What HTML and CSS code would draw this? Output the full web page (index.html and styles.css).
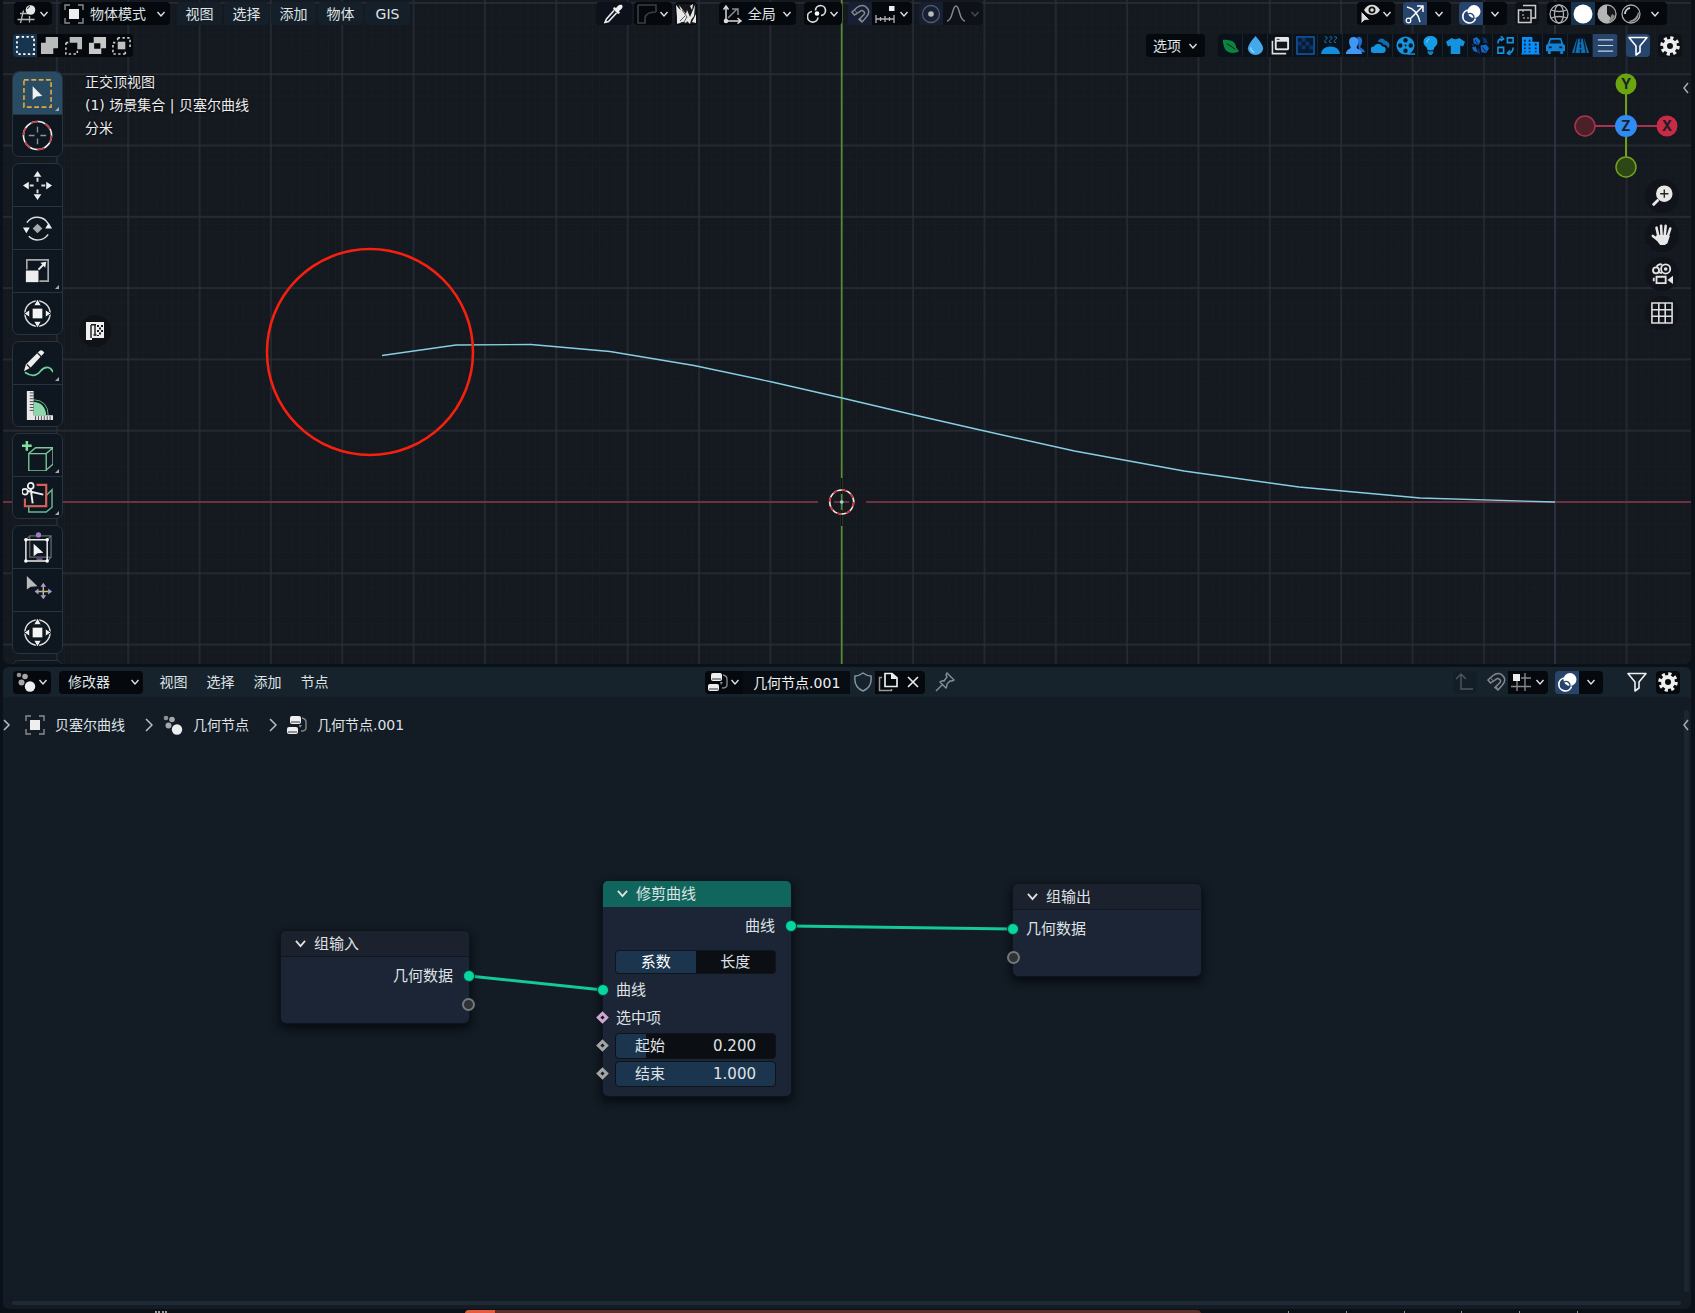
FILE: index.html
```html
<!DOCTYPE html>
<html lang="zh-CN">
<head>
<meta charset="utf-8">
<meta name="viewport" content="width=device-width, initial-scale=1">
<title>几何节点.001</title>
<link rel="stylesheet" href="styles.css">
</head>
<body>
<svg class="sprite" aria-hidden="true">
  <symbol id="chev" viewBox="0 0 10 10"><path d="M1.500 3l3.500 4 3.500-4" fill="none" stroke="currentColor" stroke-width="1.400"/></symbol>
  <symbol id="viewport-type" viewBox="0 0 20 20"><g fill="none" stroke="#b5b8bb" stroke-width="1.300"><path d="M3 9.500h8M0.500 15.500h17M6.500 6.500L3.500 19M12.500 12v6.500"/></g><circle cx="13.500" cy="6" r="4.800" fill="#e6e6e6"/><path d="M10.500 5a3 3 0 0 1 2.500-2.500" stroke="#14181f" fill="none"/></symbol>
  <symbol id="object" viewBox="0 0 20 20"><path d="M1 6V1h5M14 1h5v5M19 14v5h-5M6 19H1v-5" fill="none" stroke="#8a8d90" stroke-width="1.400"/><rect x="5" y="5" width="10" height="10" fill="#eee"/></symbol>
  <symbol id="sel-new" viewBox="0 0 20 20"><rect x="1" y="1" width="18" height="18" fill="none" stroke="#fff" stroke-width="1.800" stroke-dasharray="2.500 2.500"/></symbol>
  <symbol id="sel-add" viewBox="0 0 20 20"><path d="M6 1h13v12h-5v6H1V7h5z" fill="#b9bbbc"/></symbol>
  <symbol id="sel-sub" viewBox="0 0 20 20"><path d="M6 1h13v13h-5V7H6z" fill="#b9bbbc"/><path d="M2 7v12h12v-5M2 7h3" fill="none" stroke="#c8c8c8" stroke-width="1.700" stroke-dasharray="2.500 2.500"/></symbol>
  <symbol id="sel-xor" viewBox="0 0 20 20"><path fill-rule="evenodd" d="M6 1h13v12h-5v6H1V7h5zM6.500 7.500v6H13v-6z" fill="#c8c8c8"/></symbol>
  <symbol id="sel-and" viewBox="0 0 20 20"><path d="M6 2h13v12M6 2v4M14 19H1V7h4M14 19v-4" fill="none" stroke="#c8c8c8" stroke-width="1.700" stroke-dasharray="2.500 2.500"/><rect x="6" y="6" width="8" height="8" fill="#c0c0c0"/></symbol>
  <symbol id="eyedrop" viewBox="0 0 20 20"><path d="M12 4c2-3 4-4 6-3 1.500 2 0 4-3 6l1 2-2 1-5-5 1-2z" fill="#eee"/><path d="M10 6.500L2.500 15 1 18.500 4.500 17.500 12.500 9" fill="none" stroke="#eee" stroke-width="1.600"/></symbol>
  <symbol id="falloff-box" viewBox="0 0 20 20"><path d="M1 1h18v7M1 1v18h7V15q0-7 11-7" fill="none" stroke="#3a3f43" stroke-width="1.600"/></symbol>
  <symbol id="brush" viewBox="0 0 20 20"><rect width="20" height="20" fill="#15171b"/><path d="M0 1l5 6L3 1l7 9 1-4 3 7 5-12-1 11-3 4-1 4-3-3-1 2-4-2-2 2-3 1 2-5-2-2zM14 2l3-2-1 6zM16 18l4-8v9z" fill="#e8e8e8"/><path d="M1 3l10 9 1 5-11 2z" fill="#e8e8e8"/><path d="M4 17l5-5M8 18l3-5M6 6l5 7" stroke="#555"/></symbol>
  <symbol id="orient" viewBox="0 0 20 20"><path d="M3 18V3M0.500 5.500L3 2l2.500 3.500M3 17h14M14.500 14l3.500 3-3.500 2.500" fill="none" stroke="#d9d9d9" stroke-width="1.500"/><path d="M5 14L14 5M9 5h6v6" fill="none" stroke="#8a8d90" stroke-width="1.500"/><circle cx="3" cy="17" r="2.300" fill="#ddd"/></symbol>
  <symbol id="pivot" viewBox="0 0 20 20"><path d="M8.500 6.500A5 5 0 1 1 14 11.500M5 7.500a5.300 5.300 0 1 0 6 6" fill="none" stroke="#ddd" stroke-width="1.700"/><circle cx="10" cy="9.500" r="2.300" fill="#fff"/></symbol>
  <symbol id="magnet" viewBox="0 0 20 20"><path d="M2 8l5-4.500c4-3 8-2.500 10.500 1s1 6.500-1.500 9L12 18l-3-2.500 5-5c2-2.500-2-5-4-3.200L4.500 11z" fill="none" stroke="#84878b" stroke-width="1.500"/><path d="M4.500 6l2.500 2.800M9.500 14.500l3 2.500" stroke="#84878b"/></symbol>
  <symbol id="snap-inc" viewBox="0 0 20 20"><path d="M1 11v8M19 11v8M1 15h18M5.500 13v4M10 12v6M14.500 13v4" stroke="#b5b5b5" fill="none" stroke-width="1.300"/><rect x="14" y="2" width="5.500" height="5" fill="#eee"/></symbol>
  <symbol id="prop" viewBox="0 0 20 20"><circle cx="10" cy="10" r="8.500" fill="none" stroke="#55595e" stroke-width="1.300"/><circle cx="10" cy="10" r="2.800" fill="#bbb"/></symbol>
  <symbol id="bell" viewBox="0 0 20 20"><path d="M1 17c6 0 5-15 9-15s3 15 9 15" fill="none" stroke="#85898d" stroke-width="1.500"/></symbol>
  <symbol id="eye" viewBox="0 0 20 20"><path d="M4 6c4-7 12-7 16 0C16 12.500 8 12.500 4 6z" fill="#ddd"/><circle cx="12" cy="6" r="3.500" fill="#111"/><circle cx="12" cy="6" r="1.800" fill="#ddd"/><path d="M1 7v13l3.500-3.500 5.500-.5z" fill="#ddd" stroke="#05080c"/></symbol>
  <symbol id="gizmo" viewBox="0 0 20 20"><path d="M2 3q10 2 13 15M5 15L17 3M12 2h6v6" fill="none" stroke="#fff" stroke-width="1.500"/><circle cx="3.500" cy="16.500" r="2.300" fill="none" stroke="#fff" stroke-width="1.300"/></symbol>
  <symbol id="overlay" viewBox="0 0 20 20"><path d="M7.500 6a6.500 6.500 0 1 0 7 8.500" fill="none" stroke="#fff" stroke-width="1.700"/><circle cx="13" cy="7.500" r="6.500" fill="#fff"/><path d="M7 10a4 4 0 0 1 6 4" fill="none" stroke="#27496f" stroke-width="1.300"/></symbol>
  <symbol id="xray" viewBox="0 0 20 20"><path d="M6 1.500h12.500V14H14M1.500 6H14v12.500H1.500z" fill="none" stroke="#ccc" stroke-width="1.500"/><path d="M6 6v8h8" fill="none" stroke="#ccc" stroke-dasharray="2 2"/></symbol>
  <symbol id="wire" viewBox="0 0 20 20"><g fill="none" stroke="#aaacae" stroke-width="1.300"><circle cx="10" cy="10" r="9"/><ellipse cx="10" cy="10" rx="4.500" ry="9"/><path d="M2 6q8 3 16 0M2 14q8-3 16 0"/></g></symbol>
  <symbol id="solid" viewBox="0 0 20 20"><circle cx="10" cy="10" r="9.500" fill="#fff"/></symbol>
  <symbol id="matcap" viewBox="0 0 20 20"><circle cx="10" cy="10" r="9" fill="#15181b" stroke="#aaa" stroke-width="1.300"/><path d="M10 1a9 9 0 0 0 0 18l6-3-6-6z" fill="#b5b5b5"/><path d="M12 17l3-7 3 2-3 5z" fill="#8a8a8a"/></symbol>
  <symbol id="rendered" viewBox="0 0 20 20"><circle cx="10" cy="10" r="9" fill="none" stroke="#aaa" stroke-width="1.300"/><path d="M4 10a6 6 0 0 1 5-6" fill="none" stroke="#ccc" stroke-width="1.800"/><path d="M9 18q8 0 9-9l-1-1q-1 7-9 9z" fill="#999"/></symbol>
  <symbol id="leaf" viewBox="0 0 20 20"><path d="M2 4c8 0 13 1 14 8l3 4c-5 3-11 2-14-1C3 12 2 8 2 4z" fill="#0d8340"/><path d="M6 8q5 3 9 6" stroke="#0a1a18" fill="none"/></symbol>
  <symbol id="drop" viewBox="0 0 20 20"><path d="M10 0q8 9 8 13a8 7 0 0 1-16 0q0-4 8-13z" fill="#44a9ea"/><path d="M5 12q0 4 4 5" stroke="#9bd5fa" fill="none" stroke-width="1.500"/></symbol>
  <symbol id="window" viewBox="0 0 20 20"><rect x="4" y="1" width="15" height="14" rx="1.500" fill="#e6e6e6"/><rect x="6" y="6" width="11" height="7" fill="#11161c"/><path d="M1.500 5v13.500H16" fill="none" stroke="#ddd" stroke-width="1.700"/><path d="M6 3.500h3" stroke="#222"/></symbol>
  <symbol id="checker" viewBox="0 0 20 20"><rect x="1" y="1" width="18" height="18" fill="#071a30" stroke="#115aa8" stroke-width="1.600"/><path d="M2 6h4v4H2zM6 10h4v4H6zM10 6h4v4h-4zM14 10h4v4h-4zM6 2h4v4H6z" fill="#0b356b"/></symbol>
  <symbol id="steam" viewBox="0 0 20 20"><path d="M0 19q1-8 10-8t10 8z" fill="#108fdc"/><path d="M4 1h2q1 1 0 2L4 5q-1 2 2 2M9 1h2q1 1 0 2L9 5q-1 2 2 2M14 1h2q1 1 0 2l-2 2q-1 2 2 2" fill="none" stroke="#0d7cbd"/></symbol>
  <symbol id="people" viewBox="0 0 20 20"><path d="M12 1c6-1 6 6 3 10 0 2 4 2 5 6h-6z" fill="#246bd0"/><path d="M8 1c6 0 6 6 3 11 1 2 5 2 6 7H0c0-5 4-5 5-7C2 6 3 1 8 1z" fill="#3e98f4"/></symbol>
  <symbol id="cloud" viewBox="0 0 20 20"><path d="M3 18a3.500 3.500 0 0 1 0-7 5 5 0 0 1 9 0 3.500 3.500 0 1 1 0 7z" fill="#1593dc"/><path d="M7 6c2-5 7-4 8-1 4 0 6 6 3 8-1-3-3-4-5-4-1-2-3-3-6-3z" fill="#116bad"/></symbol>
  <symbol id="reel" viewBox="0 0 20 20"><circle cx="10" cy="10" r="9.500" fill="#1593dc"/><g fill="#0d1721"><circle cx="10" cy="4.500" r="2.300"/><circle cx="10" cy="15.500" r="2.300"/><circle cx="4.500" cy="10" r="2.300"/><circle cx="15.500" cy="10" r="2.300"/><circle cx="10" cy="10" r="1"/></g><path d="M12 19h8" stroke="#1593dc" stroke-width="1.500"/></symbol>
  <symbol id="bulb" viewBox="0 0 20 20"><path d="M10 0c9 0 9 9 4 12l-1 3H7l-1-3C1 9 1 0 10 0z" fill="#159ce5"/><path d="M7 16h6v2l-2 2H9l-2-2z" fill="#1180c4"/><path d="M6 7q0-3 3-4" fill="none" stroke="#84d0ff"/></symbol>
  <symbol id="shirt" viewBox="0 0 20 20"><path d="M6 2q4 3 8 0l6 4-2 5-3-1v9H5v-9l-3 1-2-5z" fill="#1494df"/></symbol>
  <symbol id="cubes" viewBox="0 0 20 20"><path d="M2 3l4-2 4 4-2 5-5-2zM10 10l6-1 3 4-3 5-5-1zM1 12l4-1 2 6-4-1z" fill="#1568c6"/><path d="M12 1l4 2 2 5-5-1zM8 12l2 7-4-1zM0 8l3 1v3z" fill="#0b3472"/><path d="M4 4l4 6M12 12l4 5" stroke="#071728" fill="none"/></symbol>
  <symbol id="swap" viewBox="0 0 20 20"><path d="M12 2h6v5h-6zM2 12h6v6H2zM2 8q0-5 4-5M18 12q0 5-4 6M5 0l3 3-3 2M15 15l-3 3 3 2" fill="none" stroke="#1593dc" stroke-width="1.700"/></symbol>
  <symbol id="building" viewBox="0 0 20 20"><path d="M1 1h11v5h7v13H1z" fill="#0a8df5"/><path d="M4 4v13M9 4v13M15.500 8v9" stroke="#0b1e35" stroke-width="1.800" stroke-dasharray="2 2"/><path d="M0 19h20" stroke="#0a8df5"/></symbol>
  <symbol id="car" viewBox="0 0 20 20"><path d="M4 2h12l2 6 2 2v6h-2v3h-3v-3H5v3H2v-3H0v-6l2-2z" fill="#1482d2"/><path d="M5 4h10l1 4H4z" fill="#0b1b2d"/><path d="M3 12h3M14 12h3" stroke="#0b1b2d" stroke-width="2"/></symbol>
  <symbol id="road" viewBox="0 0 20 20"><path d="M6 3h8l5 15H1z" fill="#0d70b5"/><path d="M7 3L4 18M13 3l3 15" stroke="#0b1b2d" stroke-width="1.300"/><path d="M10 3v15" stroke="#0b1b2d" stroke-width="1.500" stroke-dasharray="4 1.500"/></symbol>
  <symbol id="list" viewBox="0 0 20 20"><path d="M2 4h16M2 10h16M2 16h16" stroke="#c8d3df" stroke-width="1.300"/></symbol>
  <symbol id="filter" viewBox="0 0 20 20"><path d="M1 1.500h18L12 10v6l-4 3v-9z" fill="none" stroke="currentColor" stroke-width="1.600" stroke-linejoin="round"/></symbol>
  <symbol id="gear" viewBox="0 0 20 20"><circle cx="10" cy="10" r="8" fill="none" stroke="#eee" stroke-width="3.500" stroke-dasharray="3.140 3.140"/><circle cx="10" cy="10" r="5" fill="none" stroke="#eee" stroke-width="4"/></symbol>
  <symbol id="t-select" viewBox="0 0 32 32"><rect x="2" y="2" width="28" height="28" fill="none" stroke="#e0a93b" stroke-width="1.700" stroke-dasharray="5 2.600"/><path d="M11 8.500v14l4-3.500 6-.5z" fill="#f2f2f2"/></symbol>
  <symbol id="t-cursor" viewBox="0 0 32 32"><circle cx="16" cy="16" r="14.500" fill="none" stroke="#eee" stroke-width="1.700"/><circle cx="16" cy="16" r="14.500" fill="none" stroke="#bd3f48" stroke-width="1.700" stroke-dasharray="7.600 7.600"/><path d="M16 7v6M16 19v6M7 16h6M19 16h6" stroke="#8d9297" stroke-width="1.400"/></symbol>
  <symbol id="t-move" viewBox="0 0 32 32"><path d="M16 1l4 6h-8zM16 31l4-6h-8zM1 16l6-4v8zM31 16l-6-4v8z" fill="#eee"/><path d="M16 8v4M16 20v4M8 16h4M20 16h4" stroke="#ddd" stroke-width="2"/></symbol>
  <symbol id="t-rotate" viewBox="0 0 32 32"><path d="M5 10a13 13 0 0 1 22 1M27 22a13 13 0 0 1-20 2" fill="none" stroke="#ddd" stroke-width="1.500"/><path d="M1 15h7l-3.500 6zM24 16h7l-3.500-6z" fill="#eee"/><path d="M16 11l5 5-5 5-5-5z" fill="#aaa"/></symbol>
  <symbol id="t-scale" viewBox="0 0 32 32"><path d="M5 14V4h22v22H18" fill="none" stroke="#a5a8aa" stroke-width="1.700"/><path d="M17 14l5-5" stroke="#eee" stroke-width="2"/><path d="M25 6l-1 6-5-5z" fill="#eee"/><rect x="4" y="15" width="13" height="12" fill="#eee"/></symbol>
  <symbol id="t-transform" viewBox="0 0 32 32"><circle cx="16" cy="16" r="13" fill="none" stroke="#ddd" stroke-width="1.500"/><path d="M16 1l4 7h-8zM16 31l4-7h-8zM2 16l6-4v8zM30 16l-6-4v8z" fill="#eee" stroke="#111820"/><rect x="11" y="11" width="10" height="10" fill="#f4f4f4"/></symbol>
  <symbol id="t-annotate" viewBox="0 0 32 32"><path d="M2 24l2-7L18 3q3-2 5 2L9 20z" fill="#eee"/><path d="M16 5l5 5M5 17l4 4" stroke="#131b24" stroke-width="1.300"/><path d="M3 25c7 5 12 4 16-1s10-6 13 1" fill="none" stroke="#6acf98" stroke-width="1.800"/></symbol>
  <symbol id="t-measure" viewBox="0 0 32 32"><path d="M5 1h7v25h20v5H5z" fill="#e8e8e8"/><path d="M12 26V12q12 1 13 14z" fill="#8bd9aa"/><path d="M12 10q15 1 15 16" fill="none" stroke="#66b98a"/><path d="M8 3h4M8 6h4M8 9h4M8 12h4M8 15h4M8 18h4M8 21h4M14 31v-4M17 31v-4M20 31v-4M23 31v-4M26 31v-4M29 31v-4" stroke="#48464a"/></symbol>
  <symbol id="t-cube" viewBox="0 0 32 32"><path d="M7 14h18v18H7zM7 14l7-6h18l-7 6M32 8v17l-7 6" fill="none" stroke="#7cc79d" stroke-width="1.400"/><path d="M5 1v10M0 6h10" stroke="#83dea4" stroke-width="2.600"/></symbol>
  <symbol id="t-cut" viewBox="0 0 32 32"><path d="M25 14l6-6v18l-6 5H7v-6h18V13" fill="none" stroke="#6ab791" stroke-width="1.500"/><path d="M15 3h10v22H3v-8" fill="none" stroke="#d6615a" stroke-width="2.200"/><circle cx="9" cy="4" r="3" fill="none" stroke="#eee" stroke-width="1.800"/><circle cx="3" cy="10" r="3" fill="none" stroke="#eee" stroke-width="1.800"/><path d="M9 7l2 15M5 9l17 4" stroke="#eee" stroke-width="2"/></symbol>
  <symbol id="t-cage" viewBox="0 0 32 32"><path d="M8 4h22v22H8zM4 8l4-4M26 8l4-4M26 30l4-4" fill="none" stroke="#66696c" stroke-width="1.300"/><path d="M4 8h22v22H4z" fill="none" stroke="#eee" stroke-width="1.500"/><g fill="#fff"><circle cx="4" cy="8" r="1.800"/><circle cx="26" cy="8" r="1.800"/><circle cx="4" cy="30" r="1.800"/><circle cx="26" cy="30" r="1.800"/></g><circle cx="17" cy="3" r="2.700" fill="#a27bc5"/><path d="M15 28h6" stroke="#9774b4" stroke-width="1.500"/><path d="M12 12v13l4-3 6-.5z" fill="#f2f2f2"/></symbol>
  <symbol id="t-tweak" viewBox="0 0 32 32"><path d="M5 1v14l4-3 7-.5z" fill="#bbb"/><path d="M22 11v12M16 17h12" stroke="#c8b98b" stroke-width="1.500"/><path d="M22 8l3 4h-6zM22 25l3-4h-6zM13 17l4-3v6zM31 17l-4-3v6z" fill="#a99ad0"/></symbol>
  <symbol id="mag" viewBox="0 0 24 24"><circle cx="14.500" cy="9.500" r="9" fill="#e8e8e8"/><path d="M8 16l-6 6" stroke="#e8e8e8" stroke-width="3"/><path d="M14.500 5v9M10 9.500h9" stroke="#222" stroke-width="1.500"/></symbol>
  <symbol id="hand" viewBox="0 0 24 24"><g stroke="#e8e8e8" stroke-width="2.800" stroke-linecap="round"><path d="M8 13L6 4M11.500 12L11 2M15 12l1-10M18 14l3-9M7 17l-5-4"/></g><path d="M6.500 12h12l2 1-2.500 8-3 2H10l-6-8z" fill="#e8e8e8"/></symbol>
  <symbol id="cam" viewBox="0 0 24 24"><g fill="none" stroke="#e4e4e4" stroke-width="2"><circle cx="5.500" cy="8" r="3.300"/><circle cx="16" cy="6.500" r="5"/><path d="M6 4q3-4 6-2M8 10l4 1M6 15h10v7H6zM3 16v4"/></g><circle cx="16" cy="6.500" r="2" fill="#e4e4e4"/><path d="M24 14v9l-6-4.500z" fill="#e4e4e4"/></symbol>
  <symbol id="grid" viewBox="0 0 24 24"><path d="M1 1h22v22H1zM8.500 1v22M15.500 1v22M1 8.500h22M1 15.500h22" fill="none" stroke="#e0e0e0" stroke-width="1.700"/></symbol>
  <symbol id="tpanel" viewBox="0 0 20 20"><path d="M1 1h18v16H7v2H1z" fill="#eee"/><path d="M6 4v13M6 3.700h5M10 4v10M8.500 14h3" fill="none" stroke="#191919" stroke-width="1.400"/><path d="M12 4h2v2h-2zM16 4h2v2h-2zM14 6.500h2v2h-2zM12 9h2v2h-2zM16 9h2v2h-2zM14 11.500h2v2h-2zM12 14h2v1h-2z" fill="#191919"/></symbol>
  <symbol id="geonodes" viewBox="0 0 20 20"><circle cx="3" cy="3" r="2.300" fill="#8f9194"/><circle cx="9" cy="4.500" r="2.800" fill="#a5a7a9"/><circle cx="5.500" cy="10.500" r="3" fill="#a5a7a9"/><circle cx="14" cy="14.500" r="5.200" fill="#eee"/></symbol>
  <symbol id="nodetree" viewBox="0 0 20 20"><rect x="3" y="1" width="11" height="8" rx="2" fill="#eee"/><rect x="0" y="12" width="11" height="7" rx="2" fill="#eee"/><path d="M4 7h9M1 17h9" stroke="#30343a"/><path d="M15 3q4 1 4 4v6q0 3-5 3" fill="none" stroke="#868a8e" stroke-width="1.400"/><path d="M12 10h3l-2 3z" fill="#868a8e"/></symbol>
  <symbol id="shield" viewBox="0 0 20 20"><path d="M10 1q4 3 8 3c1 8-3 13-8 15-5-2-9-7-8-15q4 0 8-3z" fill="none" stroke="#85939d" stroke-width="1.500"/></symbol>
  <symbol id="copy" viewBox="0 0 20 20"><path d="M7 1.500h7L19 6v8.500H7z" fill="none" stroke="#eee" stroke-width="1.700"/><path d="M13 1l6 6h-6z" fill="#eee"/><path d="M4 5.500H1.500v13h12V17" fill="none" stroke="#999" stroke-width="1.500"/></symbol>
  <symbol id="close" viewBox="0 0 20 20"><path d="M5 5l10 10M15 5L5 15" stroke="#eee" stroke-width="1.600"/></symbol>
  <symbol id="pin" viewBox="0 0 20 20"><path d="M12 1l7 7-2 1-2 0-3 3q0 3-1 4L5 10q2-2 4-1l3-4-1-2zM7 13l-6 6" fill="none" stroke="#84919b" stroke-width="1.400"/></symbol>
  <symbol id="parent" viewBox="0 0 20 20"><path d="M6 3v14h12M1 7l5-5 5 5" fill="none" stroke="#4a555e" stroke-width="1.500"/></symbol>
  <symbol id="snap-grid" viewBox="0 0 20 20"><path d="M6 9v10M14 1v18M0 14.500h20M10 6h10" fill="none" stroke="#858a8f" stroke-width="1.400"/><rect x="2" y="2" width="7" height="7" fill="#eee"/></symbol>
</svg>

<main class="app">
  <section class="view" aria-label="3D 视图">
    <svg class="scene" viewBox="3 0 1688 664" preserveAspectRatio="xMidYMid slice" aria-hidden="true">
      <defs>
        <pattern id="minor" x="841.700" y="502" width="7.135" height="7.130" patternUnits="userSpaceOnUse"><path d="M0 0v7.130M0 0h7.135" stroke="#191d24" stroke-width="1" fill="none"/></pattern>
        <pattern id="major" x="806" y="466.350" width="71.350" height="71.300" patternUnits="userSpaceOnUse"><path d="M35.700 0v71.300M0 35.650h71.350" stroke="#292e38" stroke-width="1.300" fill="none"/></pattern>
      </defs>
      <rect x="3" width="1688" height="664" fill="#14181f"/>
      <rect x="3" width="1688" height="664" fill="url(#minor)"/>
      <rect x="3" width="1688" height="664" fill="url(#major)"/>
      <path d="M1555 0v664" stroke="#2c3546" stroke-width="1.500"/>
      <path d="M3 502h1688" stroke="#873448" stroke-width="1.500"/>
      <path d="M841.700 0v664" stroke="#588c30" stroke-width="1.700"/>
      <path d="M382 355.500L456 345l75-.5 79 7 84 14 78 16.500 70 16 68 16 68 15.500 96.500 21.500L1184 471l115 16 121 11 135 4" fill="none" stroke="#86cfe2" stroke-width="1.400"/>
      <g fill="none"><path d="M818 502h16M849 502h17M841.700 478v16M841.700 510v16" stroke="#090b0e" stroke-width="1.500"/><circle cx="841.700" cy="502" r="12" stroke="#eee" stroke-width="1.700"/><circle cx="841.700" cy="502" r="12" stroke="#d62c35" stroke-width="1.700" stroke-dasharray="4.710 4.710"/><circle cx="841.700" cy="502" r="1.800" fill="#8fd7ea"/></g>
      <circle cx="370" cy="352" r="103" fill="none" stroke="#f6200f" stroke-width="2.600"/>
    </svg>

    <header class="bar view-main">
      <button class="btn type" aria-label="编辑器类型"><svg class="i"><use href="#viewport-type"/></svg><svg class="c"><use href="#chev"/></svg></button>
      <label class="btn mode"><svg class="i"><use href="#object"/></svg><select aria-label="模式"><option>物体模式</option></select><svg class="c"><use href="#chev"/></svg></label>
      <nav class="menus tinted"><button>视图</button><button>选择</button><button>添加</button><button>物体</button><button>GIS</button></nav>
      <span class="space"></span>
      <div class="tools">
        <button class="btn dropper" aria-label="吸管"><svg class="i"><use href="#eyedrop"/></svg></button>
        <button class="btn type" aria-label="衰减"><svg class="i"><use href="#falloff-box"/></svg><svg class="c"><use href="#chev"/></svg></button>
        <button class="btn thumb" aria-label="笔刷"><svg class="i"><use href="#brush"/></svg></button>
        <label class="btn orient"><svg class="i"><use href="#orient"/></svg><select aria-label="变换坐标系"><option>全局</option></select><svg class="c"><use href="#chev"/></svg></label>
        <button class="btn type pivot" aria-label="轴心点"><svg class="i"><use href="#pivot"/></svg><svg class="c"><use href="#chev"/></svg></button>
        <div class="joined"><button class="btn cell navy" aria-label="吸附"><svg class="i"><use href="#magnet"/></svg></button><button class="btn wide" aria-label="吸附设置"><svg class="i"><use href="#snap-inc"/></svg><svg class="c"><use href="#chev"/></svg></button></div>
        <div class="joined last"><button class="btn cell navy" aria-label="衰减编辑"><svg class="i"><use href="#prop"/></svg></button><button class="btn wide faint" aria-label="衰减类型"><svg class="i"><use href="#bell"/></svg><svg class="c"><use href="#chev"/></svg></button></div>
      </div>
      <span class="space big"></span>
      <div class="tools right">
        <button class="btn type" aria-label="可选性与可见性"><svg class="i"><use href="#eye"/></svg><svg class="c"><use href="#chev"/></svg></button>
        <div class="joined"><button class="btn cell on" aria-label="Gizmo"><svg class="i"><use href="#gizmo"/></svg></button><button class="btn cell" aria-label="Gizmo 设置"><svg class="c"><use href="#chev"/></svg></button></div>
        <div class="joined"><button class="btn cell on" aria-label="叠加层"><svg class="i"><use href="#overlay"/></svg></button><button class="btn cell" aria-label="叠加层设置"><svg class="c"><use href="#chev"/></svg></button></div>
        <button class="btn cell clear" aria-label="透视模式"><svg class="i"><use href="#xray"/></svg></button>
        <div class="joined"><button class="btn cell" aria-label="线框"><svg class="i"><use href="#wire"/></svg></button><button class="btn cell deep" aria-label="实体"><svg class="i"><use href="#solid"/></svg></button><button class="btn cell" aria-label="材质预览"><svg class="i"><use href="#matcap"/></svg></button><button class="btn cell" aria-label="渲染"><svg class="i"><use href="#rendered"/></svg></button><button class="btn cell" aria-label="着色设置"><svg class="c"><use href="#chev"/></svg></button></div>
      </div>
    </header>

    <header class="bar view-sub">
      <div class="joined"><button class="btn cell deep" aria-label="新选择"><svg class="i"><use href="#sel-new"/></svg></button><button class="btn cell" aria-label="扩展"><svg class="i"><use href="#sel-add"/></svg></button><button class="btn cell" aria-label="减去"><svg class="i"><use href="#sel-sub"/></svg></button><button class="btn cell" aria-label="反转"><svg class="i"><use href="#sel-xor"/></svg></button><button class="btn cell" aria-label="相交"><svg class="i"><use href="#sel-and"/></svg></button></div>
      <span class="space"></span>
      <button class="btn options">选项<svg class="c"><use href="#chev"/></svg></button>
      <div class="joined filters">
        <button aria-label="植物"><svg class="i"><use href="#leaf"/></svg></button><button aria-label="水"><svg class="i"><use href="#drop"/></svg></button><button aria-label="窗口"><svg class="i"><use href="#window"/></svg></button><button aria-label="纹理"><svg class="i"><use href="#checker"/></svg></button><button aria-label="食物"><svg class="i"><use href="#steam"/></svg></button><button aria-label="人物"><svg class="i"><use href="#people"/></svg></button><button aria-label="天空"><svg class="i"><use href="#cloud"/></svg></button><button aria-label="影片"><svg class="i"><use href="#reel"/></svg></button><button aria-label="灯光"><svg class="i"><use href="#bulb"/></svg></button><button aria-label="服装"><svg class="i"><use href="#shirt"/></svg></button><button aria-label="模型"><svg class="i"><use href="#cubes"/></svg></button><button aria-label="替换"><svg class="i"><use href="#swap"/></svg></button><button aria-label="建筑"><svg class="i"><use href="#building"/></svg></button><button aria-label="车辆"><svg class="i"><use href="#car"/></svg></button><button aria-label="道路"><svg class="i"><use href="#road"/></svg></button><button class="on" aria-label="列表"><svg class="i"><use href="#list"/></svg></button>
      </div>
      <button class="btn cell on" aria-label="过滤"><svg class="i"><use href="#filter"/></svg></button>
      <button class="btn cell clear" aria-label="设置"><svg class="i"><use href="#gear"/></svg></button>
    </header>

    <div class="view-body">
      <div class="toolbar">
        <div class="group"><button class="active more" aria-label="框选"><svg><use href="#t-select"/></svg></button><button aria-label="游标"><svg><use href="#t-cursor"/></svg></button></div>
        <div class="group"><button aria-label="移动"><svg><use href="#t-move"/></svg></button><button aria-label="旋转"><svg><use href="#t-rotate"/></svg></button><button class="more" aria-label="缩放"><svg><use href="#t-scale"/></svg></button><button aria-label="变换"><svg><use href="#t-transform"/></svg></button></div>
        <div class="group"><button class="more" aria-label="标注"><svg><use href="#t-annotate"/></svg></button><button aria-label="测量"><svg><use href="#t-measure"/></svg></button></div>
        <div class="group"><button class="more" aria-label="添加立方体"><svg><use href="#t-cube"/></svg></button><button class="more" aria-label="切割"><svg><use href="#t-cut"/></svg></button></div>
        <div class="group"><button aria-label="框架"><svg><use href="#t-cage"/></svg></button><button aria-label="微调"><svg><use href="#t-tweak"/></svg></button><button aria-label="变换框"><svg><use href="#t-transform"/></svg></button></div>
        <div class="group"><button aria-label="更多工具"></button></div>
      </div>
      <div class="info">
        <p>正交顶视图</p><p>(1) 场景集合 | 贝塞尔曲线</p><p>分米</p>
        <button class="float" aria-label="面板"><svg class="i"><use href="#tpanel"/></svg></button>
      </div>
      <div class="navigate">
        <svg class="axes" viewBox="0 0 106 106" role="img" aria-label="坐标轴">
          <path d="M53 53V12M53 53v41" stroke="#6f9f16" stroke-width="2"/><path d="M12 53h82" stroke="#a8334c" stroke-width="2"/>
          <circle cx="53" cy="11" r="10.500" fill="#6aa510"/><circle cx="94" cy="53" r="10.500" fill="#c92a46"/><circle cx="53" cy="53" r="11" fill="#2f8cf5"/>
          <circle cx="12" cy="53" r="10" fill="#4c2028" stroke="#ab334b" stroke-width="1.500"/><circle cx="53" cy="94" r="10" fill="#2e4717" stroke="#71a31a" stroke-width="1.500"/>
          <text x="53" y="16">Y</text><text x="94" y="58">X</text><text x="53" y="58">Z</text>
        </svg>
        <div class="nav-buttons"><button aria-label="缩放视图"><svg><use href="#mag"/></svg></button><button aria-label="平移视图"><svg><use href="#hand"/></svg></button><button aria-label="摄像机视图"><svg><use href="#cam"/></svg></button><button aria-label="正交"><svg><use href="#grid"/></svg></button></div>
      </div>
    </div>
    <svg class="edge view-edge" viewBox="0 0 6 12" aria-hidden="true"><path d="M5 1L1 6l4 5"/></svg>
  </section>

  <section class="nodes" aria-label="几何节点编辑器">
    <header class="bar node-bar">
      <button class="btn type" aria-label="编辑器类型"><svg class="i"><use href="#geonodes"/></svg><svg class="c"><use href="#chev"/></svg></button>
      <label class="btn modifier"><select aria-label="节点树类型"><option>修改器</option></select><svg class="c"><use href="#chev"/></svg></label>
      <nav class="menus"><button>视图</button><button>选择</button><button>添加</button><button>节点</button></nav>
      <span class="space"></span>
      <div class="joined tree"><button class="btn type" aria-label="浏览节点树"><svg class="i"><use href="#nodetree"/></svg><svg class="c"><use href="#chev"/></svg></button><input type="text" aria-label="节点树名称" value="几何节点.001"><button class="btn cell plain" aria-label="伪用户"><svg class="i"><use href="#shield"/></svg></button><button class="btn cell" aria-label="复制"><svg class="i"><use href="#copy"/></svg></button><button class="btn cell" aria-label="断开"><svg class="i"><use href="#close"/></svg></button></div>
      <button class="btn cell plain" aria-label="固定"><svg class="i"><use href="#pin"/></svg></button>
      <span class="space wider"></span>
      <div class="tools right">
        <button class="btn cell dim" aria-label="上级节点树"><svg class="i"><use href="#parent"/></svg></button>
        <div class="joined"><button class="btn cell plain" aria-label="吸附"><svg class="i"><use href="#magnet"/></svg></button><button class="btn wide" aria-label="吸附设置"><svg class="i"><use href="#snap-grid"/></svg><svg class="c"><use href="#chev"/></svg></button></div>
        <div class="joined"><button class="btn cell on" aria-label="叠加层"><svg class="i"><use href="#overlay"/></svg></button><button class="btn cell" aria-label="叠加层设置"><svg class="c"><use href="#chev"/></svg></button></div>
      </div>
      <button class="btn cell plain filter" aria-label="过滤"><svg class="i"><use href="#filter"/></svg></button>
      <button class="btn cell" aria-label="设置"><svg class="i"><use href="#gear"/></svg></button>
    </header>
    <nav class="crumbs" aria-label="路径">
      <svg class="sep" viewBox="0 0 8 14"><path d="M1 2l5 5-5 5"/></svg>
      <span><svg class="i"><use href="#object"/></svg>贝塞尔曲线</span>
      <svg class="sep" viewBox="0 0 8 14"><path d="M1 1l6 6-6 6"/></svg>
      <span><svg class="i"><use href="#geonodes"/></svg>几何节点</span>
      <svg class="sep" viewBox="0 0 8 14"><path d="M1 1l6 6-6 6"/></svg>
      <span><svg class="i"><use href="#nodetree"/></svg>几何节点.001</span>
    </nav>
    <div class="canvas">
      <svg class="links" aria-hidden="true"><path d="M466 223l134 14M788 173l222 3"/></svg>
      <article class="node input">
        <h2><svg class="c"><use href="#chev"/></svg>组输入</h2>
        <p class="out">几何数据<i class="socket geo"></i></p>
        <p class="out"><i class="socket virtual"></i></p>
      </article>
      <article class="node trim">
        <h2><svg class="c"><use href="#chev"/></svg>修剪曲线</h2>
        <p class="out">曲线<i class="socket geo"></i></p>
        <div class="switch"><label><input type="radio" name="mode" checked><span>系数</span></label><label><input type="radio" name="mode"><span>长度</span></label></div>
        <p>曲线<i class="socket geo"></i></p>
        <p>选中项<i class="socket diamond pink"></i></p>
        <div class="row"><label class="field" style="--fill:19%"><span>起始</span><input type="text" value="0.200"></label><i class="socket diamond"></i></div>
        <div class="row"><label class="field" style="--fill:100%"><span>结束</span><input type="text" value="1.000"></label><i class="socket diamond"></i></div>
      </article>
      <article class="node output">
        <h2><svg class="c"><use href="#chev"/></svg>组输出</h2>
        <p>几何数据<i class="socket geo"></i></p>
        <p><i class="socket virtual"></i></p>
      </article>
    </div>
    <div class="scroll-y"></div><div class="scroll-x"></div>
    <svg class="edge node-edge" viewBox="0 0 6 12" aria-hidden="true"><path d="M5 1L1 6l4 5"/></svg>
  </section>
</main>
<footer class="status"><span class="mouse"></span><div class="alert"><b></b></div><div class="stats"><i></i><i></i><i></i><i></i><i></i><i></i></div></footer>
</body>
</html>
```
FILE: styles.css
```css
* { box-sizing: border-box; }
body {
  margin: 0; height: 100vh; display: flex; flex-direction: column; overflow: hidden;
  background: #0a1118; color: #dfe2e4;
  font: 14px/20px "DejaVu Sans", "Noto Sans CJK SC", sans-serif;
}
button, input, select { font: inherit; color: inherit; border: 0; padding: 0; margin: 0; background: none; }
p, h2 { margin: 0; font-weight: 400; }
svg { flex: none; display: block; }
.sprite { position: absolute; width: 0; height: 0; }
.app { flex: 1; min-height: 0; padding: 0 4px 0 3px; display: grid; grid-template-rows: 664fr 642fr; gap: 3px; }
.view, .nodes { position: relative; min-height: 0; overflow: hidden; display: flex; flex-direction: column; }
.view { border-radius: 0 0 6px 6px; padding-top: 2px; }
.scene { position: absolute; inset: 0; width: 100%; height: 100%; }

.bar { position: relative; display: flex; align-items: center; height: 23px; flex: none; }
.i { width: 20px; height: 20px; }
.c { width: 10px; height: 10px; }
.space { flex: 187; }
.space.big { flex: 377; }
.btn { display: flex; align-items: center; justify-content: center; height: 23px; background: #05080c; border-radius: 4px; }
.type { width: 38px; gap: 2px; }
.wide { width: 40px; gap: 4px; }
.cell { width: 24px; }
.on { background: #27456c; color: #fff; }
.deep { background: #17354e; }
.navy { background: #161f33; }
.clear { background: #0e1217; }
.plain { background: none; }
.dim { background: #141e27; }
.joined { display: flex; border-radius: 4px; overflow: hidden; flex: none; }
.joined .btn { border-radius: 0; }
.tools { display: flex; }
.right { gap: 8px; }
select { appearance: none; outline: 0; flex: 1; min-width: 0; }
.menus { display: flex; gap: 2px; margin-left: 7px; }
.menus button { width: 45px; height: 23px; border-radius: 4px; }
.tinted button { background: #151f29; }

.view-main { padding: 0 24px 0 11px; }
.mode { width: 110px; margin-left: 8px; padding: 0 4px; gap: 6px; }
.mode select { flex: 1 0 60px; }
.dropper { width: 36px; background: #0d111c; margin-right: 2px; }
.thumb { width: 22px; margin: 0 22px 0 3px; }
.orient { width: 77px; padding: 0 4px; gap: 5px; margin-right: 8px; }
.pivot { margin-right: 6px; }
.last { margin-left: 7px; }
.faint { background: #0e1218; color: #464b50; }
.view-sub { margin-top: 9px; padding: 0 9px 0 10px; }
.view-sub .joined .i { width: 19px; height: 19px; }
.options { width: 59px; gap: 7px; margin-right: 13px; }
.filters { margin-right: 8px; background: #0b1119; }
.filters button { width: 25px; height: 23px; display: flex; align-items: center; justify-content: center; border-right: 1px solid #19222d; }
.view-sub > .clear { margin-left: 8px; }

.view-body { position: relative; display: flex; flex: 1; min-height: 0; margin-top: 14px; padding: 0 12px 0 9px; }
.toolbar { display: flex; flex-direction: column; gap: 6px; width: 51px; }
.group { flex: none; border: 1px solid #27333f; border-radius: 7px; overflow: hidden; background: #0e161f; }
.group button { position: relative; display: flex; align-items: center; justify-content: center; width: 100%; height: 43px; border-top: 1px solid #27333f; }
.group button:first-child { height: 42px; border-top: 0; }
.group button:last-child { height: 42px; }
.group svg { width: 31px; height: 31px; }
.group .active { background: #294b63; }
.more::after { content: ""; position: absolute; right: 3px; bottom: 3px; border: 2px solid; border-color: transparent #a8adb1 #a8adb1 transparent; }
.info { padding-left: 22px; flex: 1; line-height: 23px; font-weight: 500; color: #eceeef; text-shadow: 0 0 2px #000; }
.float { display: flex; align-items: center; justify-content: center; width: 32px; height: 32px; margin: 175px 0 0 -6px; border-radius: 50%; background: #0f1216; }
.navigate { display: flex; flex-direction: column; align-items: flex-end; padding-top: 2px; }
.axes { width: 106px; height: 106px; }
.axes text { font: 700 14px Inter, sans-serif; text-anchor: middle; fill: #1a2029; }
.nav-buttons { display: flex; flex-direction: column; gap: 5px; }
.nav-buttons button { display: flex; align-items: center; justify-content: center; width: 34px; height: 34px; border-radius: 50%; background: #101319; }
.nav-buttons svg { width: 22px; height: 22px; }
.edge { position: absolute; right: 2px; width: 6px; height: 12px; fill: none; stroke: #a6abaf; stroke-width: 1.5; }
.view-edge { top: 82px; }

.nodes { background: #131b24; border-radius: 6px; }
.node-bar { height: 30px; background: #16232d; padding: 0 11px 0 10px; }
.modifier { width: 84px; margin-left: 8px; padding: 0 3px 0 9px; }
.node-bar .menus { margin-left: 8px; }
.node-bar .space { flex: 366; }
.node-bar .wider { flex: 493; }
.tree input { width: 107px; height: 23px; padding-left: 10px; background: #080d14; outline: 0; color: #f0f1f2; }
.tree .cell { width: 25px; }
.tree { margin-right: 8px; }
.node-bar .right { gap: 7px; }
.node-bar .filter { margin: 0 7px 0 22px; color: #eee; }
.crumbs { position: relative; display: flex; align-items: center; height: 56px; flex: none; }
.crumbs span { display: flex; align-items: center; gap: 10px; }
.crumbs .sep { width: 8px; height: 14px; margin: 0 10px 0 20px; fill: none; stroke: #b9bec2; stroke-width: 1.5; }
.crumbs .sep:first-child { margin: 0 14px 0 0; }
.canvas { position: relative; flex: 1; }
.links { position: absolute; inset: 0; width: 100%; height: 100%; fill: none; stroke: #13c998; stroke-width: 3; }

.node { position: absolute; width: 188px; padding-bottom: 5px; border-radius: 5px; background: #1c2535; box-shadow: 0 0 0 1px #0d141c, 0 4px 9px 2px #070c12; font-size: 15px; line-height: 28px; }
.node h2 { display: flex; align-items: center; gap: 7px; height: 26px; margin-bottom: 5px; padding-left: 13px; font-size: 15px; background: #1b212d; border-bottom: 1px solid #111722; border-radius: 5px 5px 0 0; }
.node h2 .c { width: 13px; height: 13px; }
.node p, .row { position: relative; height: 28px; padding: 0 13px; }
.node .out { text-align: right; padding-right: 16px; }
.input { left: 278px; top: 178px; }
.trim { left: 600px; top: 128px; padding-bottom: 8px; }
.output { left: 1010px; top: 131px; }
.trim h2 { background: #10665c; border-color: #10665c; }
.socket { position: absolute; left: -6px; top: 8px; width: 12px; height: 12px; border-radius: 50%; border: 1px solid #0b3a35; }
.out .socket { left: auto; right: -6px; }
.geo { background: #06d6a0; }
.virtual { width: 13px; height: 13px; background: #2f3234; border: 2px solid #75797c; }
.diamond { width: 9px; height: 9px; left: -5px; top: 9px; border-radius: 0; border: 3px solid #a2a4a6; background: #15181c; transform: rotate(45deg); }
.pink { border-color: #cfa6d2; }
.switch { display: flex; height: 24px; margin: 10px 15px 2px 12px; border-radius: 4px; overflow: hidden; background: #0b0e13; border: 1px solid #10151c; line-height: 22px; text-align: center; }
.switch label { flex: 1; }
.switch input { position: absolute; opacity: 0; }
.switch span { display: block; }
.switch input:checked + span { background: #1a354d; color: #fff; }
.node .row { padding: 1px 15px 1px 12px; }
.field { display: flex; height: 26px; align-items: center; padding: 0 19px; border: 1px solid #0d131b; border-radius: 4px; background: linear-gradient(#1a354d, #1a354d) 0 0 / var(--fill) 100% no-repeat #0b0e13; }
.field input { flex: 1; min-width: 0; width: 40px; text-align: right; outline: 0; }
.scroll-y { position: absolute; right: 2px; top: 43px; bottom: 17px; width: 5px; border-radius: 3px; background: #1c2630; }
.scroll-x { position: absolute; left: 9px; right: 10px; bottom: 4px; height: 4px; border-radius: 2px; background: #1f2a34; }
.node-edge { top: 52px; }

.status { flex: none; height: 4px; display: flex; overflow: hidden; background: #0a1015; }
.mouse { width: 12px; height: 2px; margin: 2px 298px 0 155px; border: 2px dotted #999; border-bottom: 0; }
.alert { width: 736px; height: 8px; margin-top: 1px; background: #5c2f28; border-radius: 4px 4px 0 0; overflow: hidden; }
.alert b { display: block; width: 30px; height: 8px; background: #e65c3c; }
.stats { flex: 1; display: flex; justify-content: space-evenly; padding: 2px 60px 0 30px; }
.stats i { width: 1px; background: #8b8f92; }
```
